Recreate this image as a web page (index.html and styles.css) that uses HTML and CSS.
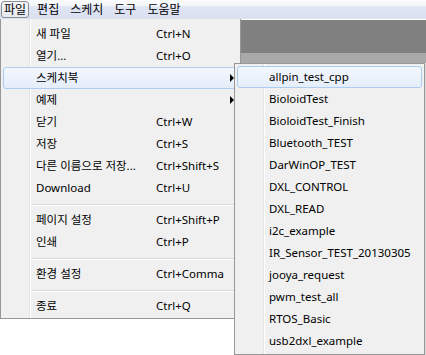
FILE: index.html
```html
<!DOCTYPE html>
<html lang="ko">
<head>
  <meta charset="UTF-8" />
  <title>Sketchbook menu</title>
  <link rel="stylesheet" href="styles.css">
</head>
<body>

  <!-- Menu bar -->
  <div class="menubar">
    <span class="menubar-item open">파일</span>
    <span class="menubar-item">편집</span>
    <span class="menubar-item">스케치</span>
    <span class="menubar-item">도구</span>
    <span class="menubar-item">도움말</span>
  </div>

  <!-- Window content behind the menus -->
  <div class="workspace">
    <div class="toolbar"></div>
    <div class="tabstrip"></div>
  </div>

  <!-- File menu -->
  <div class="menu file-menu">
    <div class="item"><span class="label">새 파일</span><span class="key">Ctrl+N</span></div>
    <div class="item"><span class="label">열기...</span><span class="key">Ctrl+O</span></div>
    <div class="item hover"><span class="label">스케치북</span><span class="key"></span><span class="arrow"></span></div>
    <div class="item"><span class="label">예제</span><span class="key"></span><span class="arrow"></span></div>
    <div class="item"><span class="label">닫기</span><span class="key">Ctrl+W</span></div>
    <div class="item"><span class="label">저장</span><span class="key">Ctrl+S</span></div>
    <div class="item"><span class="label">다른 이름으로 저장...</span><span class="key">Ctrl+Shift+S</span></div>
    <div class="item"><span class="label">Download</span><span class="key">Ctrl+U</span></div>
    <div class="separator"></div>
    <div class="item"><span class="label">페이지 설정</span><span class="key">Ctrl+Shift+P</span></div>
    <div class="item"><span class="label">인쇄</span><span class="key">Ctrl+P</span></div>
    <div class="separator"></div>
    <div class="item"><span class="label">환경 설정</span><span class="key">Ctrl+Comma</span></div>
    <div class="separator"></div>
    <div class="item"><span class="label">종료</span><span class="key">Ctrl+Q</span></div>
  </div>

  <!-- Sketchbook submenu -->
  <div class="menu submenu">
    <div class="item hover"><span class="label">allpin_test_cpp</span></div>
    <div class="item"><span class="label">BioloidTest</span></div>
    <div class="item"><span class="label">BioloidTest_Finish</span></div>
    <div class="item"><span class="label">Bluetooth_TEST</span></div>
    <div class="item"><span class="label">DarWinOP_TEST</span></div>
    <div class="item"><span class="label">DXL_CONTROL</span></div>
    <div class="item"><span class="label">DXL_READ</span></div>
    <div class="item"><span class="label">i2c_example</span></div>
    <div class="item"><span class="label">IR_Sensor_TEST_20130305</span></div>
    <div class="item"><span class="label">jooya_request</span></div>
    <div class="item"><span class="label">pwm_test_all</span></div>
    <div class="item"><span class="label">RTOS_Basic</span></div>
    <div class="item"><span class="label">usb2dxl_example</span></div>
  </div>

</body>
</html>
```

FILE: styles.css
```css
:root {
  --menu-bg: #f0f0f0;
  --menu-border: #979797;
  --gutter: #e2e3e3;
  --hover-border: #aeccf0;
  --text: #000;
}

* {
  box-sizing: border-box;
}

body {
  margin: 0;
  width: 426px;
  height: 355px;
  overflow: hidden;
  position: relative;
  background: #fff;
  font-family: "Noto Sans", "Noto Sans CJK KR", sans-serif;
  font-size: 11.5px;
  color: var(--text);
}

.menubar {
  height: 19px;
  display: flex;
  gap: 5px;
  padding: 1px 0 0 1px;
  background: linear-gradient(#fbfcfe 0, #f3f5fb 30%, #dfe5f4 36%, #d9e0f1 100%);
  font-size: 12px;
}

.menubar-item {
  height: 17px;
  line-height: 15px;
  padding: 0 2px;
  border: 1px solid transparent;
  border-radius: 3px;
}

.menubar-item.open {
  border-color: #8a8d92;
  background: linear-gradient(#f4f6f9, #e6e9ef);
}

.workspace {
  border-top: 1px solid #fff;
}

.toolbar {
  height: 33px;
  background: #808080;
}

.tabstrip {
  height: 10px;
  background: #a9a9a9;
}

.menu {
  position: absolute;
  background-color: var(--menu-bg);
  background-image: linear-gradient(to right, transparent 28px, var(--gutter) 28px, var(--gutter) 29px, #fff 29px, #fff 30px, transparent 30px);
  border: 1px solid var(--menu-border);
  padding: 2px 0;
}

.file-menu {
  left: 0;
  top: 19px;
  width: 241px;
  height: 300px;
  border-top: none;
  padding-top: 4px;
}

.submenu {
  left: 234px;
  top: 63px;
  width: 191px;
  height: 292px;
  padding-top: 2px;
  box-shadow: 1px 1px 0 #d8d8d8;
}

.item {
  height: 22px;
  line-height: 22px;
  margin: 0 2px;
  padding-left: 32px;
  display: flex;
  align-items: center;
  border: 1px solid transparent;
  border-radius: 3px;
  position: relative;
  white-space: nowrap;
}

.submenu .item {
  padding-left: 31px;
}

.item .label {
  width: 120px;
}

.item .key {
  flex: 1;
}

.item.hover {
  border-color: var(--hover-border);
  background: linear-gradient(#f3f7fd, #e4edf9);
}

.arrow {
  width: 0;
  height: 0;
  margin-right: 3px;
  border-top: 4px solid transparent;
  border-bottom: 4px solid transparent;
  border-left: 4px solid #000;
}

.separator {
  height: 10px;
  margin-left: 30px;
  padding-top: 5px;
}

.separator::before {
  content: "";
  display: block;
  height: 1px;
  margin-right: 2px;
  background: #d7d7d7;
  border-bottom: 1px solid #fff;
  box-sizing: content-box;
}
```
